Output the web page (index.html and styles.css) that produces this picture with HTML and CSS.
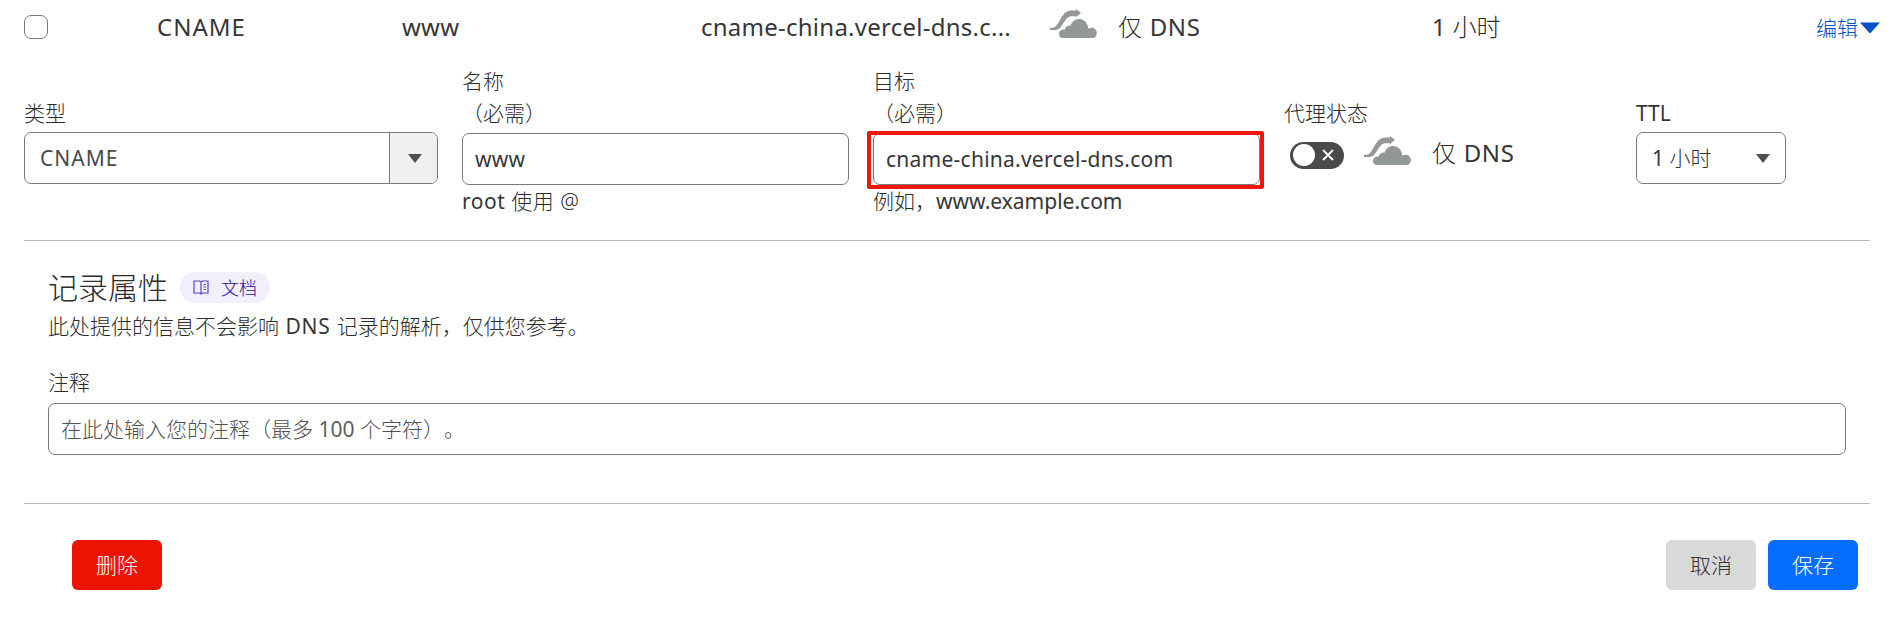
FILE: index.html
```html
<!DOCTYPE html>
<html lang="zh-CN">
<head>
<meta charset="utf-8">
<title>DNS 记录</title>
<link rel="stylesheet" href="styles.css">
</head>
<body>
<svg class="defs" width="0" height="0">
  <symbol id="cloud" viewBox="0 0 48 30">
    <path fill="#959899" d="M0 18.800h1.500c3.800 0 5-2.500 7.600-6.400C13 5.500 15.500 1.500 21.500 1.500H26V0l5 3.700-5 4.500V7.200h-4.300c-3.700 0-5.500 2.500-8.200 6.800C10.700 18.500 9 21 4.500 21H0z"/>
    <path fill="#929798" d="M13 29h29.500c2.500 0 4.300-2 4.300-5 0-3.500-3-5.800-6.300-5.100-.9.100-1.600.3-2.200.6C37.500 13.500 34 10 29.500 10c-4.500 0-7.700 2.600-8.900 6.800-1-.5-2.400-.4-3.600.4-1.300.8-2 2-2 3.400-3.800-.1-6 1.700-6 4.400C9 27.500 10.700 29 13 29z"/>
  </symbol>
</svg>
<main class="page">
  <section class="record">
    <span class="checkbox"></span>
    <span class="latin caps">CNAME</span>
    <span class="latin host">www</span>
    <span class="latin host">cname-china.vercel-dns.c...</span>
    <svg class="cloud" width="48" height="30"><use href="#cloud"/></svg>
    <span class="only">仅 <b class="latin">DNS</b></span>
    <span class="ttl"><b class="latin">1</b> 小时</span>
    <a class="edit">编辑<svg width="20" height="12" viewBox="0 0 20 12"><path fill="#0051c3" d="M0 .5h20L11 10.500q-1 1-2 0z"/></svg></a>
  </section>

  <section class="form">
    <div class="field type">
      <label class="label">类型</label>
      <div class="select">
        <span class="value latin caps">CNAME</span>
        <span class="handle"><svg width="14" height="9"><path fill="#4f4f4f" d="M0 0h14L7 9z"/></svg></span>
      </div>
    </div>
    <div class="field name">
      <label class="label">名称<br><span class="required">（必需）</span></label>
      <div class="input"><span class="latin host">www</span></div>
      <div class="hint root"><b class="latin">root</b> 使用 @</div>
    </div>
    <div class="field dest">
      <label class="label">目标<br><span class="required">（必需）</span></label>
      <div class="input"><span class="latin host">cname-china.vercel-dns.com</span><i class="frame"></i></div>
      <div class="hint">例如，<span class="latin">www.example.com</span></div>
    </div>
    <div class="field proxy">
      <label class="label">代理状态</label>
      <div class="status">
        <span class="toggle"><i class="knob"></i><svg width="12" height="12" viewBox="0 0 12 12"><path d="M1 1l10 10M11 1L1 11" stroke="#fff" stroke-width="1.800"/></svg></span>
        <svg class="cloud" width="48" height="30"><use href="#cloud"/></svg>
        <span class="only">仅 <b class="latin">DNS</b></span>
      </div>
    </div>
    <div class="field time">
      <label class="label latin">TTL</label>
      <div class="select">
        <span class="value"><b class="latin">1</b> 小时</span>
        <svg width="14" height="9"><path fill="#4f4f4f" d="M0 0h14L7 9z"/></svg>
      </div>
    </div>
  </section>

  <section class="attributes">
    <div class="heading">
      <h2>记录属性</h2>
      <a class="badge"><svg width="16" height="15" viewBox="0 0 16 15" fill="none" stroke="#5b45c8" stroke-width="1.200"><path d="M1 1h5.500L8 2l1.500-1H15v12H9.500L8 14l-1.500-1H1zM8 2v12M10.500 4.500h2.500M10.500 7h2.500M10.500 9.500h2.500"/></svg><span>文档</span></a>
    </div>
    <p class="desc">此处提供的信息不会影响 <b class="latin">DNS</b> 记录的解析，仅供您参考。</p>
    <label class="label">注释</label>
    <div class="input comment"><span>在此处输入您的注释（最多 <b class="latin">100</b> 个字符）。</span></div>
  </section>

  <footer class="actions">
    <button class="btn delete">删除</button>
    <button class="btn cancel">取消</button>
    <button class="btn save">保存</button>
  </footer>
</main>
</body>
</html>
```
FILE: styles.css
```css
* { box-sizing: border-box; }
body {
  margin: 0;
  background: #fff;
  color: #2b2b2b;
  font: 300 21px/32px "Noto Sans", "Noto Sans CJK SC", sans-serif;
  text-spacing-trim: space-all;
}
.defs { position: absolute; }
.page { height: 626px; padding: 0 24px; overflow: hidden; }
svg { display: block; flex: none; }
span, label, a { white-space: nowrap; }
.latin { font-weight: 400; color: #363636; }
.caps { letter-spacing: 1px; }
.host { letter-spacing: 0.25px; }
.only { letter-spacing: 0.7px; }

.record {
  display: grid;
  grid-template-columns: 133px 245px 299px 349px 68px 314px 1fr auto;
  align-items: center;
  height: 54px;
  font-size: 24px;
}
.checkbox { width: 24px; height: 24px; border: 1px solid #797979; border-radius: 7px; }
.record .cloud { margin-top: -7px; }
.ttl { letter-spacing: 0.2px; }
.edit {
  display: flex;
  align-items: center;
  gap: 2px;
  margin-right: -10px;
  padding-top: 1px;
  color: #0051c3;
  font-size: 21px;
}

.form {
  display: grid;
  grid-template-columns: 438px 411px 411px 352px 150px;
  height: 186px;
}
.field { padding-top: 42px; }
.name, .dest { padding-top: 11px; }
.label { display: block; }
.name .label, .dest .label { line-height: 32px; height: 68px; }
.type .label, .proxy .label, .time .label { height: 36px; line-height: 34px; }
.select, .input {
  display: flex;
  align-items: center;
  height: 52px;
  border: 1px solid #797979;
  border-radius: 7px;
  background: #fff;
}
.type .select { width: 414px; overflow: hidden; }
.name .input, .dest .input { width: 387px; padding-left: 12px; }
.dest .input { position: relative; }
.frame {
  position: absolute;
  inset: -3px -5px -5px -7px;
  border: 4px solid #f0160c;
  border-radius: 2px;
}
.select .value { flex: 1; padding-left: 15px; color: #4a4a4a; }
.time .value { color: #333; }
.handle {
  display: grid;
  place-items: center;
  align-self: stretch;
  width: 48px;
  padding-left: 3px;
  border-left: 1px solid #797979;
  background: #f0f0f0;
}
.time .select { padding-right: 15px; }
.hint { height: 32px; white-space: nowrap; }
.root { letter-spacing: 0.5px; }
.status { display: flex; align-items: center; height: 42px; padding-left: 6px; font-size: 24px; }
.toggle {
  display: flex;
  align-items: center;
  justify-content: space-between;
  width: 54px;
  height: 27px;
  margin: 4px 20px 0 0;
  padding: 0 10px 0 3px;
  border-radius: 14px;
  background: #4a4a4a;
}
.knob { flex: none; width: 22px; height: 22px; border-radius: 50%; background: #fff; }
.status .cloud { margin: -4px 20px 0 0; }

.attributes {
  height: 264px;
  padding: 29px 24px 0;
  border-top: 1px solid #b6b6b6;
  border-bottom: 1px solid #b6b6b6;
}
.heading { display: flex; align-items: center; gap: 12px; height: 35px; }
h2 { margin: 0; font-size: 30px; line-height: 35px; font-weight: inherit; }
.badge {
  display: flex;
  align-items: center;
  gap: 12px;
  width: 90px;
  height: 31px;
  padding-left: 13px;
  border-radius: 16px;
  background: #f1effc;
  color: #2c0f9c;
  font-size: 18px;
}
.desc { margin: 5px 0 24px; height: 32px; white-space: nowrap; word-spacing: 1px; }
.desc .latin { letter-spacing: 0.7px; }
.attributes .label { height: 37px; }
.comment { padding-left: 12px; color: #505050; }
.comment .latin { color: #606060; }

.actions { display: flex; gap: 12px; padding: 36px 12px 0 48px; }
.btn {
  width: 90px;
  height: 50px;
  padding: 0;
  border: 0;
  border-radius: 6px;
  color: #fff;
  font: inherit;
}
.delete { margin-right: auto; background: #eb1403; }
.cancel { background: #d9d9d9; color: #313131; }
.save { background: #056dff; }
```
